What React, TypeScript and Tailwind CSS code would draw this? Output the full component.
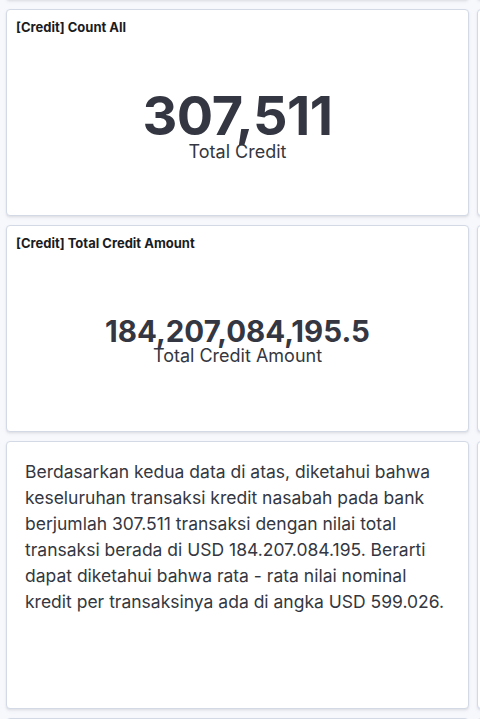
function Panel({ title, className, children }: { title?: string; className?: string; children?: React.ReactNode }) {
  return (
    <div
      className={`flex flex-col rounded-[4px] border border-[#d3dae6] bg-white shadow-[0_1px_2px_rgba(0,0,0,0.05),0_2px_3px_rgba(152,162,179,0.15)] ${className ?? ''}`}
    >
      {title && (
        <div className="px-[9px] pt-[9px] text-[13px] font-bold leading-[17px] text-[#1a1c21]">{title}</div>
      )}
      {children}
    </div>
  )
}

function Metric({ value, label, valueClass }: { value: string; label: string; valueClass: string }) {
  return (
    <div className="flex flex-col items-center text-[#343741]">
      <div className={`font-bold leading-none ${valueClass}`}>{value}</div>
      <div className="text-[18px] leading-[18px]">{label}</div>
    </div>
  )
}

export default function App() {
  return (
    <div
      className="h-[719px] w-[480px] overflow-hidden bg-[#f7f8fc]"
      style={{ fontFamily: 'Inter, "Noto Sans", sans-serif' }}
    >
      <div className="flex w-[700px] gap-[8px] pl-[6px]">
        <div className="flex w-[463px] shrink-0 flex-col gap-[9px] -mt-[200px]">
          <Panel className="h-[200px]" />
          <Panel title="[Credit] Count All" className="h-[207px]">
            <div className="pt-[53px]">
              <Metric value="307,511" label="Total Credit" valueClass="text-[54px] -tracking-[0.5px]" />
            </div>
          </Panel>
          <Panel title="[Credit] Total Credit Amount" className="h-[207px]">
            <div className="pt-[65px]">
              <Metric value="184,207,084,195.5" label="Total Credit Amount" valueClass="text-[29.5px]" />
            </div>
          </Panel>
          <Panel className="h-[268px]">
            <p className="pl-[18px] pr-[14px] pt-[17px] text-[17.5px] leading-[26px] text-[#343741]">
              Berdasarkan kedua data di atas, diketahui bahwa keseluruhan transaksi kredit nasabah pada bank berjumlah
              307.511 transaksi dengan nilai total transaksi berada di USD 184.207.084.195. Berarti dapat diketahui bahwa
              rata - rata nilai nominal kredit per transaksinya ada di angka USD 599.026.
            </p>
          </Panel>
          <Panel className="h-[200px]" />
        </div>
        <div className="flex w-[200px] shrink-0 flex-col gap-[9px] -mt-[200px]">
          <Panel className="h-[200px]" />
          <Panel className="h-[207px]" />
          <Panel className="h-[207px]" />
          <Panel className="h-[268px]" />
          <Panel className="h-[200px]" />
        </div>
      </div>
    </div>
  )
}
